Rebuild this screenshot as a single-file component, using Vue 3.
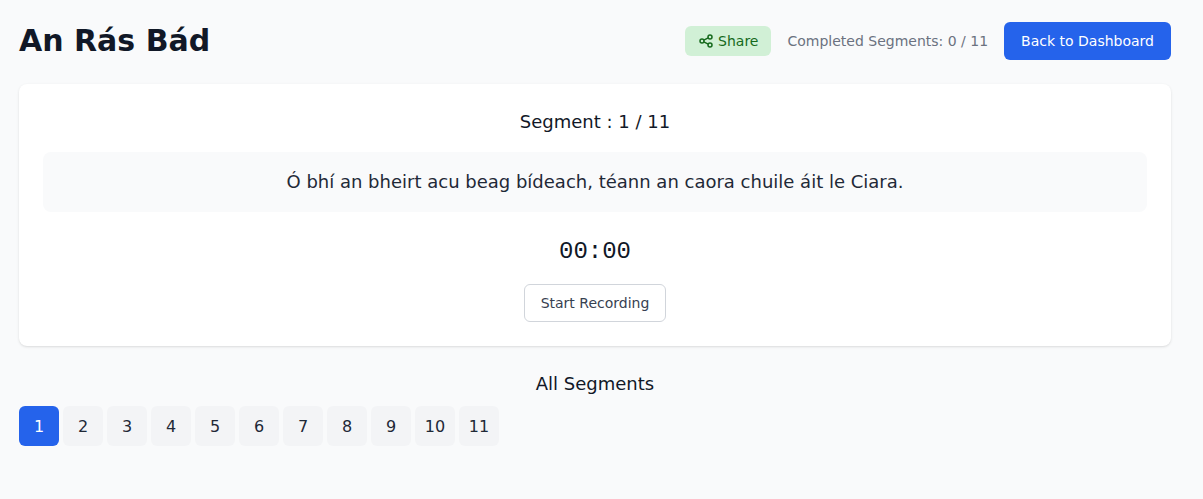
<script setup>
import { ref } from 'vue'

const total = 11
const current = ref(1)
const completed = ref(0)
</script>

<template>
  <main class="page">
    <header class="header">
      <h1 class="title">An Rás Bád</h1>
      <div class="actions">
        <button type="button" class="share">
          <svg class="share-icon" viewBox="0 0 16 16" aria-hidden="true">
            <circle cx="4" cy="8" r="2" />
            <circle cx="12" cy="4" r="2" />
            <circle cx="12" cy="12" r="2" />
            <path d="M5.8 7.1l4.4-2.2M5.8 8.9l4.4 2.2" />
          </svg>
          <span>Share</span>
        </button>
        <span class="progress">Completed Segments: {{ completed }} / {{ total }}</span>
        <a href="#" class="back">Back to Dashboard</a>
      </div>
    </header>

    <section class="card">
      <h2 class="heading">Segment : {{ current }} / {{ total }}</h2>
      <p class="sentence">Ó bhí an bheirt acu beag bídeach, téann an caora chuile áit le Ciara.</p>
      <div class="timer">00:00</div>
      <button type="button" class="record">Start Recording</button>
    </section>

    <section>
      <h2 class="heading">All Segments</h2>
      <nav class="segments" aria-label="Segments">
        <button
          v-for="n in total"
          :key="n"
          type="button"
          class="segment"
          :class="{ active: n === current }"
          @click="current = n"
        >{{ n }}</button>
      </nav>
    </section>
  </main>
</template>

<style>
body {
  margin: 0;
  background: #f9fafb;
}
</style>

<style scoped>
.page,
.page * {
  box-sizing: border-box;
}

.page {
  padding: 20px 32px 32px 19px;
  color: #111827;
  font-family: "DejaVu Sans", sans-serif;
  font-size: 16px;
  line-height: 24px;
}

button {
  font: inherit;
  cursor: pointer;
}

h1,
h2,
p {
  margin: 0;
}

.header {
  display: flex;
  justify-content: space-between;
  align-items: center;
  margin-bottom: 22px;
}

.title {
  font-size: 30px;
  line-height: 42px;
  font-weight: 700;
}

.actions {
  display: flex;
  align-items: center;
  gap: 16px;
  font-size: 14px;
  line-height: 20px;
}

.share {
  display: flex;
  align-items: center;
  gap: 4px;
  padding: 5px 13px;
  border: 0;
  border-radius: 6px;
  background: #d1f0d6;
  color: #166a1d;
}

.share-icon {
  width: 16px;
  height: 16px;
  fill: none;
  stroke: currentColor;
  stroke-width: 1.5;
}

.progress {
  color: #6b7280;
}

.back {
  padding: 9px 17px;
  border-radius: 6px;
  background: #2563eb;
  color: #fff;
  text-decoration: none;
}

.card {
  display: flex;
  flex-direction: column;
  align-items: center;
  margin-bottom: 24px;
  padding: 24px;
  border-radius: 8px;
  background: #fff;
  box-shadow: 0 1px 3px rgba(0, 0, 0, 0.1), 0 1px 2px -1px rgba(0, 0, 0, 0.1);
}

.heading {
  font-size: 18px;
  line-height: 28px;
  font-weight: 400;
  text-align: center;
}

.sentence {
  width: 100%;
  margin: 16px 0 24px;
  padding: 16px;
  border-radius: 8px;
  background: #f9fafb;
  color: #1f2937;
  font-size: 18px;
  line-height: 28px;
  text-align: center;
}

.timer {
  margin-bottom: 16px;
  font-family: "Liberation Mono", monospace;
  font-size: 24px;
  line-height: 32px;
}

.record {
  padding: 8px 16px;
  border: 1px solid #d1d5db;
  border-radius: 6px;
  background: #fff;
  color: #374151;
  font-size: 14px;
  line-height: 20px;
}

.segments {
  display: flex;
  flex-wrap: wrap;
  gap: 4px;
  margin-top: 8px;
}

.segment {
  width: 40px;
  height: 40px;
  padding: 0;
  border: 0;
  border-radius: 6px;
  background: #f3f4f6;
  color: #1f2937;
  line-height: normal;
}

.segment.active {
  background: #2563eb;
  color: #fff;
}
</style>
